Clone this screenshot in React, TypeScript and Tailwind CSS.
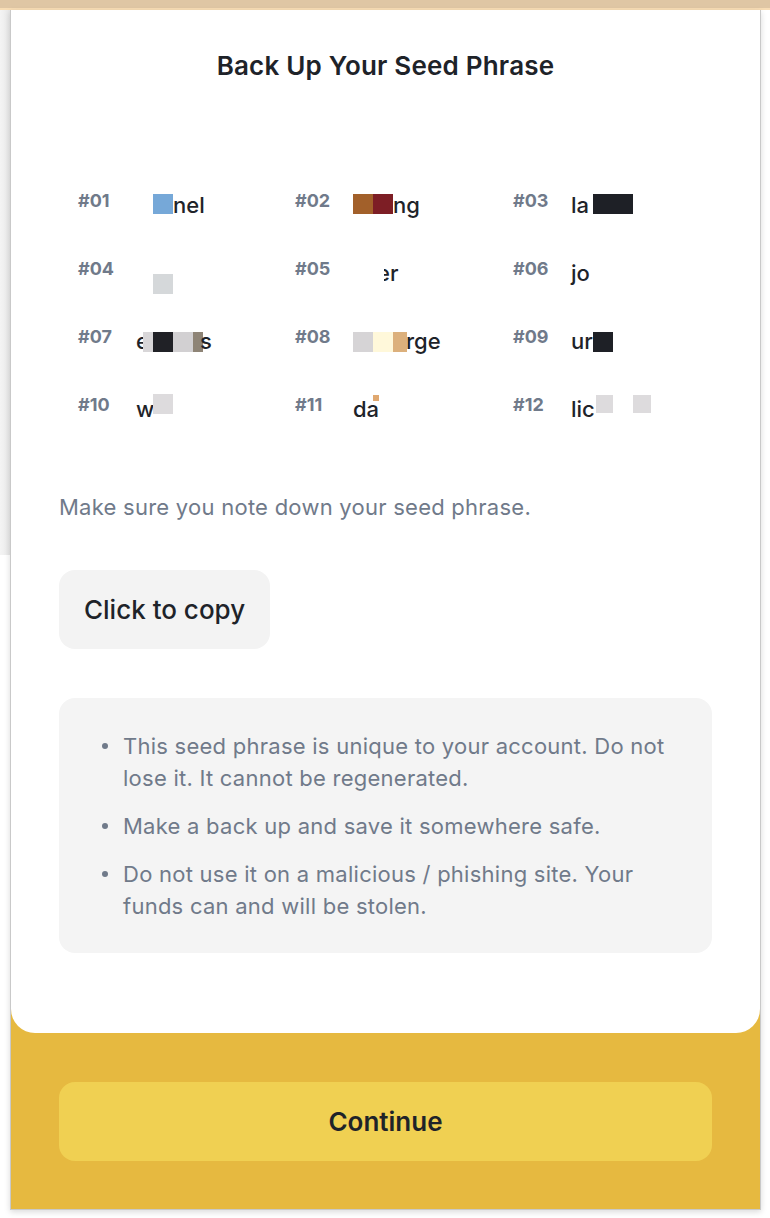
import React from "react";

// blocks are the censor squares lying over the words; x is relative to the word start
type Block = { x: number; y: number; w?: number; h?: number; c: string };
type Word = { n: string; text: string; tx?: number; post?: string; px?: number; blocks?: Block[] };

const words: Word[] = [
  { n: "01", text: "nel", tx: 37, blocks: [{ x: 17, y: 5, c: "#76a8d8" }] },
  { n: "02", text: "ng", tx: 40, blocks: [{ x: 0, y: 5, c: "#a2602a" }, { x: 20, y: 5, c: "#7d1e25" }] },
  { n: "03", text: "la", blocks: [{ x: 22, y: 5, w: 40, c: "#1e2026" }] },
  { n: "04", text: "", blocks: [{ x: 17, y: 17, c: "#d5d8da" }] },
  { n: "05", text: "er", tx: 24, blocks: [{ x: 0, y: 0, w: 31, h: 28, c: "#ffffff" }] },
  { n: "06", text: "jo" },
  {
    n: "07",
    text: "e",
    post: "s",
    px: 64,
    blocks: [
      { x: 7, y: 7, w: 10, c: "#d8d6d8" },
      { x: 17, y: 7, c: "#202126" },
      { x: 37, y: 7, c: "#d2d0d2" },
      { x: 57, y: 7, w: 10, c: "#8e8476" },
    ],
  },
  {
    n: "08",
    text: "rge",
    tx: 53,
    blocks: [
      { x: 0, y: 7, c: "#d6d4d6" },
      { x: 20, y: 7, c: "#fff8da" },
      { x: 40, y: 7, w: 14, c: "#dcb07c" },
    ],
  },
  { n: "09", text: "urn", blocks: [{ x: 22, y: 7, w: 20, c: "#1e2026" }, { x: 42, y: 0, w: 20, h: 28, c: "#ffffff" }] },
  { n: "10", text: "w", blocks: [{ x: 17, y: 1, c: "#dddbdd" }] },
  { n: "11", text: "da", blocks: [{ x: 20, y: 2, w: 6, h: 6, c: "#e0a870" }] },
  {
    n: "12",
    text: "lic",
    blocks: [
      { x: 25, y: 2, w: 17, h: 18, c: "#dddbdd" },
      { x: 62, y: 2, w: 18, h: 18, c: "#dddbdd" },
    ],
  },
];

const tips = [
  "This seed phrase is unique to your account. Do not lose it. It cannot be regenerated.",
  "Make a back up and save it somewhere safe.",
  "Do not use it on a malicious / phishing site. Your funds can and will be stolen.",
];

const font = { fontFamily: "Inter, Roboto, 'Liberation Sans', sans-serif" };

function SeedCell({ w }: { w: Word }) {
  return (
    <div className="relative flex items-start h-[24px]">
      <span className="w-[58px] text-[18px] leading-[24px] font-bold text-[#707a8a]">#{w.n}</span>
      <span
        className="mt-[4px] text-[22px] leading-[24px] font-medium text-[#1e2329] whitespace-nowrap"
        style={{ marginLeft: w.tx ?? 0 }}
      >
        {w.text}
      </span>
      {w.blocks?.map((b, i) => (
        <span
          key={i}
          className="absolute"
          style={{ left: 58 + b.x, top: b.y, width: b.w ?? 20, height: b.h ?? 20, background: b.c }}
        />
      ))}
      {w.post && (
        <span
          className="absolute top-[4px] text-[22px] leading-[24px] font-medium text-[#1e2329]"
          style={{ left: 58 + (w.px ?? 0) }}
        >
          {w.post}
        </span>
      )}
    </div>
  );
}

export default function App() {
  return (
    <div className="w-[770px] h-[1218px] bg-white overflow-hidden" style={font}>
      <div className="h-[8px] bg-[#dfc6a4]" />
      <div className="h-[2px] bg-[#f8ddb5]" />
      <div className="flex">
        <div className="w-[10px] h-[545px] bg-gradient-to-r from-[#f4f4f4] to-[#e8e8e8]" />
        <div className="w-[751px] h-[1200px] flex flex-col bg-[#e6b940] border-x border-b border-[#c9c9c9] shadow-[0_2px_6px_rgba(0,0,0,0.15)]">
          <div className="h-[1023px] bg-white rounded-b-[24px] px-[48px] pt-[40px]">
            <h1 className="text-center text-[26px] leading-[32px] font-semibold tracking-[0.2px] text-[#1e2329]">
              Back Up Your Seed Phrase
            </h1>

            <div className="mt-[107px] pl-[19px] grid grid-cols-[217px_218px_1fr] gap-y-[44px]">
              {words.map((w) => (
                <SeedCell key={w.n} w={w} />
              ))}
            </div>

            <p className="mt-[74px] text-[22px] leading-[32px] tracking-[0.25px] text-[#707a8a]">
              Make sure you note down your seed phrase.
            </p>

            <button className="mt-[47px] h-[79px] px-[25px] rounded-2xl bg-[#f3f3f3] text-[26px] font-medium text-[#1e2329]">
              Click to copy
            </button>

            <div className="mt-[49px] h-[255px] rounded-2xl bg-[#f4f4f4] pl-[43px] pr-[40px] py-[32px] flex flex-col gap-[16px]">
              {tips.map((t) => (
                <div key={t} className="flex items-start text-[22px] leading-[32px] tracking-[0.25px] text-[#707a8a]">
                  <span className="w-[6px] h-[6px] rounded-full bg-[#707a8a] mt-[13px] mr-[15px] shrink-0" />
                  <span>{t}</span>
                </div>
              ))}
            </div>
          </div>

          <div className="px-[48px] pt-[49px]">
            <button className="w-full h-[79px] rounded-2xl bg-[#f0d052] text-[26px] font-semibold text-[#1e2329]">
              Continue
            </button>
          </div>
        </div>
      </div>
    </div>
  );
}
